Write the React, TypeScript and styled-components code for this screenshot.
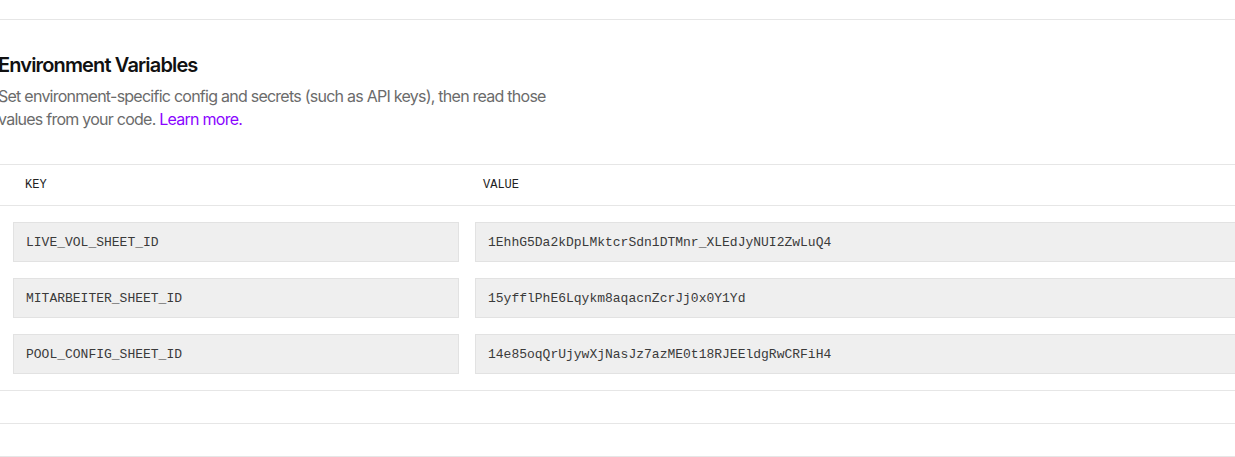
import React from "react";
import styled, { createGlobalStyle } from "styled-components";

const Global = createGlobalStyle`
  html, body { margin: 0; padding: 0; background: #fff; overflow: hidden; }
  body { font-family: Inter, "Noto Sans", sans-serif; color: #111; }
`;

const Page = styled.div`
  width: 1300px;
  margin-left: -2px;
  padding-top: 19px;
`;

const TopRule = styled.div`
  height: 1px;
  background: #e6e6e6;
`;

const Header = styled.div`
  padding-top: 31px;
  padding-bottom: 33px;
`;

const Title = styled.h2`
  margin: 0;
  font-size: 20px;
  line-height: 28px;
  font-weight: 600;
  letter-spacing: -0.85px;
  color: #111;
`;

const Description = styled.p`
  margin: 6px 0 0;
  max-width: 556px;
  font-size: 16px;
  line-height: 23px;
  letter-spacing: -0.75px;
  color: #6b6b6b;
`;

const Link = styled.a`
  color: #8a05ff;
  text-decoration: none;
`;

const Table = styled.div`
  border-top: 1px solid #e6e6e6;
`;

const HeadRow = styled.div`
  display: grid;
  grid-template-columns: 446px 1fr;
  column-gap: 16px;
  height: 40px;
  align-items: center;
  padding-left: 15px;
  border-bottom: 1px solid #e6e6e6;
`;

const HeadCell = styled.div<{ $pad: number }>`
  padding-left: ${(p) => p.$pad}px;
  font-family: "Liberation Mono", "DejaVu Sans Mono", monospace;
  font-size: 12px;
  color: #222;
`;

const Body = styled.div`
  display: flex;
  flex-direction: column;
  gap: 16px;
  padding: 16px 0 16px 15px;
  border-bottom: 1px solid #e6e6e6;
`;

const Row = styled.div`
  display: grid;
  grid-template-columns: 446px 1fr;
  column-gap: 16px;
`;

const Field = styled.div`
  box-sizing: border-box;
  height: 40px;
  display: flex;
  align-items: center;
  padding: 0 12px;
  background: #efefef;
  border: 1px solid #e2e2e2;
  font-family: "Liberation Mono", "DejaVu Sans Mono", monospace;
  font-size: 13px;
  color: #3a3a3a;
  white-space: nowrap;
`;

const EmptyRow = styled.div`
  height: 32px;
  border-bottom: 1px solid #e6e6e6;
`;

const vars = [
  ["LIVE_VOL_SHEET_ID", "1EhhG5Da2kDpLMktcrSdn1DTMnr_XLEdJyNUI2ZwLuQ4"],
  ["MITARBEITER_SHEET_ID", "15yfflPhE6Lqykm8aqacnZcrJj0x0Y1Yd"],
  ["POOL_CONFIG_SHEET_ID", "14e85oqQrUjywXjNasJz7azME0t18RJEEldgRwCRFiH4"],
];

export default function App() {
  return (
    <>
      <Global />
      <Page>
        <TopRule />
        <Header>
          <Title>Environment Variables</Title>
          <Description>
            Set environment-specific config and secrets (such as API keys), then read those
            values from your code. <Link href="#">Learn more.</Link>
          </Description>
        </Header>
        <Table>
          <HeadRow>
            <HeadCell $pad={12}>KEY</HeadCell>
            <HeadCell $pad={8}>VALUE</HeadCell>
          </HeadRow>
          <Body>
            {vars.map(([k, v]) => (
              <Row key={k}>
                <Field>{k}</Field>
                <Field>{v}</Field>
              </Row>
            ))}
          </Body>
          <EmptyRow />
          <EmptyRow />
        </Table>
      </Page>
    </>
  );
}
